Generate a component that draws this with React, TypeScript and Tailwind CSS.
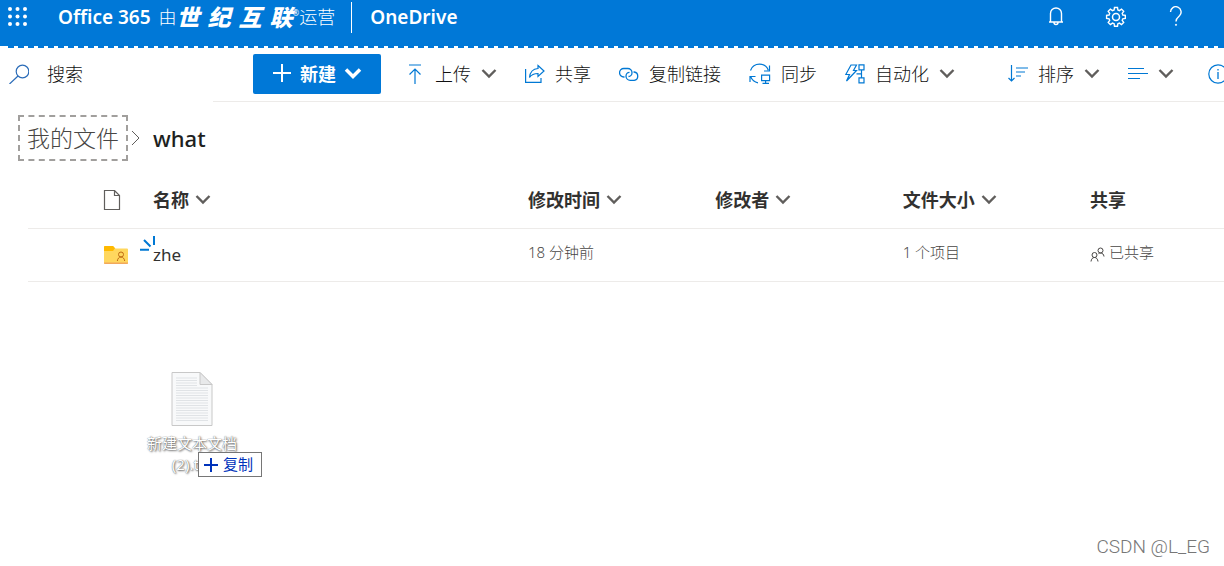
import clsx from 'clsx';
import { ReactNode, useState } from 'react';

function Icon({
  size = 20,
  className,
  children
}: {
  size?: number;
  className?: string;
  children: ReactNode;
}) {
  return (
    <svg
      width={size}
      height={size}
      viewBox={`0 0 ${size} ${size}`}
      fill="none"
      stroke="currentColor"
      aria-hidden="true"
      className={clsx('shrink-0', className)}
    >
      {children}
    </svg>
  );
}

function ChevronDown({ className }: { className?: string }) {
  return (
    <Icon size={16} className={className}>
      <path d="M1.500 4 8 10.500 14.500 4" strokeWidth="2.400" />
    </Icon>
  );
}

const icons = {
  upload: (
    <Icon>
      <path d="M4 1h12M10 20V5M4.500 10.500 10 5l5.500 5.500" strokeWidth="1.200" />
    </Icon>
  ),
  share: (
    <Icon>
      <path d="M.6 5v13.400h15.400v-4.400" strokeWidth="1.200" />
      <path d="M13 1.500 19 7l-6 5.500V9.500C9 9.500 6.500 10.500 4.500 13.500 5 8.500 8 4.800 13 4.500z" strokeWidth="1.200" />
    </Icon>
  ),
  link: (
    <Icon>
      <path
        d="M5.500 13H4.800a4.200 4.200 0 0 1 0-8.500h4a4.200 4.200 0 0 1 4.200 4.200c0 2-1.500 3.800-3.500 3.800"
        strokeWidth="1.300"
      />
      <path
        d="M14.500 8h.7a4.200 4.200 0 0 1 0 8.300h-4A4.200 4.200 0 0 1 7 12.200c0-2 1.500-3.800 3.500-3.800"
        strokeWidth="1.300"
      />
    </Icon>
  ),
  sync: (
    <Icon size={22}>
      <path d="M1.500 7.500C3 3.500 6.500 1.200 10.500 1.200c4 0 7.300 2.300 8.800 6M20.500 2.500V8h-5.500M9 19.800c-3.500-.6-6-2.800-7.300-6M1 19v-5.500h5.500" strokeWidth="1.200" />
      <path d="M12.600 12.100h8v5.500h-8zM16.600 17.600v3M13.500 20.400h6.500" strokeWidth="1.200" />
    </Icon>
  ),
  flow: (
    <Icon>
      <path d="M6 1h5.500L8.500 6.500h3L1.500 17 4.500 10.500H.8z" strokeWidth="1.200" />
      <path d="M14 .8h5v5h-5zM14 13.800h5v5h-5zM16.500 5.800v8M11.500 9.800h5" strokeWidth="1.200" />
    </Icon>
  ),
  sort: (
    <Icon>
      <path d="M3.500 1v16M.5 14l3 3 3-3M8 4h12M8 8h9M8 12h5" strokeWidth="1.200" />
    </Icon>
  ),
  list: (
    <Icon>
      <path d="M0 4.500h16M0 9.500h20M0 14.500h12" />
    </Icon>
  )
};

const leftCommands = [
  { label: '上传', icon: icons.upload, menu: true },
  { label: '共享', icon: icons.share },
  { label: '复制链接', icon: icons.link },
  { label: '同步', icon: icons.sync },
  { label: '自动化', icon: icons.flow, menu: true }
];

function Command({ label, icon, menu }: { label: string; icon: ReactNode; menu?: boolean }) {
  return (
    <button
      type="button"
      className="flex h-10 shrink-0 items-center gap-2.5 text-lg font-light text-[#111]"
    >
      <span className="text-[#0078d4]">{icon}</span>
      <span className="whitespace-nowrap">{label}</span>
      {menu && <ChevronDown className="text-[#605e5c]" />}
    </button>
  );
}

function TopBar() {
  return (
    <header className="h-12 bg-[#0078d7] text-white">
      <div className="flex h-[34px] items-center justify-between">
        <div className="flex h-full items-center">
          <button type="button" aria-label="应用启动器" className="pr-7.5 pl-2">
            <svg width="20" height="20" viewBox="0 0 20 20" fill="currentColor">
              {[2, 9.5, 17].map((y) =>
                [2, 9.5, 17].map((x) => <circle key={`${x}-${y}`} cx={x} cy={y} r="2" />)
              )}
            </svg>
          </button>
          <a href="#office" className="flex items-center text-lg leading-8 whitespace-nowrap">
            <span className="text-[19px] font-semibold">Office 365</span>
            <span className="ml-2 font-light">由</span>
            <span className="flex items-center gap-2 text-[23px] font-black italic">
              <span>世</span>
              <span>纪</span>
              <span>互</span>
              <span>联</span>
            </span>
            <sup className="text-[8px]">®</sup>
            <span className="font-light">运营</span>
          </a>
          <a
            href="#onedrive"
            className="ml-4 flex h-[31px] items-center border-l border-white pl-4.5 text-[19px] font-semibold"
          >
            OneDrive
          </a>
        </div>
        <div className="flex shrink-0 pr-4.5">
          <button type="button" aria-label="通知" className="flex w-15 justify-center">
            <Icon>
              <path d="M3 16h14M4.500 16V7.500a5.500 5.500 0 0 1 11 0V16M8 16.500a2 2 0 0 0 4 0" strokeWidth="1.400" />
            </Icon>
          </button>
          <button type="button" aria-label="设置" className="flex w-15 justify-center">
            <Icon size={22}>
              <circle cx="11" cy="11" r="3.500" strokeWidth="1.500" />
              <path
                d="M9.500 1.500h3l.4 2.500 1.500.6 2.100-1.500 2.200 2.200-1.500 2.100.6 1.600 2.500.4v3l-2.500.4-.6 1.500 1.500 2.100-2.200 2.200-2.100-1.500-1.500.6-.4 2.500h-3l-.4-2.500-1.600-.6-2.100 1.500-2.200-2.200 1.500-2.100-.6-1.500-2.500-.4v-3l2.500-.4.6-1.600-1.500-2.100 2.200-2.200 2.100 1.500 1.600-.6z"
                strokeWidth="1.400"
              />
            </Icon>
          </button>
          <button type="button" aria-label="帮助" className="flex w-15 justify-center">
            <Icon>
              <path d="M4.500 6a5.300 5.300 0 1 1 9 3.800C11.500 11.500 10 12.500 10 15.500" strokeWidth="1.400" />
              <circle cx="10" cy="18.800" r=".6" fill="currentColor" />
            </Icon>
          </button>
        </div>
      </div>
      {/* drop target edge */}
      <div className="mt-3 h-0.5 bg-[repeating-linear-gradient(90deg,#fff_0_4px,transparent_4px_10px)] bg-position-[4px_0]" />
    </header>
  );
}

function CommandBar() {
  return (
    <div className="flex h-[54px] overflow-hidden">
      <label className="flex w-[213px] shrink-0 items-center gap-[18px] pb-0.5 pl-[9px]">
        <Icon className="text-[#2b6cb8]">
          <circle cx="13.500" cy="7.500" r="6.300" strokeWidth="1.200" />
          <path d="M9 12 .5 20" strokeWidth="1.200" />
        </Icon>
        <input
          type="search"
          aria-label="搜索"
          placeholder="搜索"
          className="w-full min-w-0 text-lg font-light outline-none placeholder:text-[#111]"
        />
      </label>
      <div className="flex min-w-0 grow items-center justify-between border-b border-[#edebe9] pb-px pl-10">
        <div className="flex items-center gap-7">
          <button
            type="button"
            className="-mr-1 flex h-10 w-32 shrink-0 items-center justify-center gap-2 rounded-xs bg-[#0078d7] text-lg font-bold text-white"
          >
            <Icon>
              <path d="M10 0v18M1 9h18" strokeWidth="2" />
            </Icon>
            <span>新建</span>
            <Icon size={18}>
              <path d="m2 4.500 7 7 7-7" strokeWidth="3.500" />
            </Icon>
          </button>
          {leftCommands.map((command) => (
            <Command key={command.label} {...command} />
          ))}
        </div>
        <div className="-mr-1 flex shrink-0 items-center gap-7">
          <Command label="排序" icon={icons.sort} menu />
          <button type="button" aria-label="视图" className="flex items-center gap-2.5">
            <span className="text-[#0078d4]">{icons.list}</span>
            <ChevronDown className="text-[#605e5c]" />
          </button>
          <button type="button" aria-label="详细信息" className="ml-1.5 text-[#0078d4]">
            <Icon>
              <circle cx="10" cy="10" r="9.200" strokeWidth="1.200" />
              <path d="M10 8v7M10 5v1.500" strokeWidth="1.300" />
            </Icon>
          </button>
        </div>
      </div>
    </div>
  );
}

function Breadcrumb() {
  return (
    <nav aria-label="路径" className="flex items-center px-[18px] pt-[13px]">
      <a
        href="#files"
        className="flex h-[46px] items-center border-2 border-dashed border-[#a19f9d] px-[7px] text-[23px] font-light text-[#484644]"
      >
        我的文件
      </a>
      <Icon size={16} className="text-[#605e5c]">
        <path d="m4 1 7 7-7 7" />
      </Icon>
      <h1 className="pl-[9px] text-[22px] font-medium text-[#201f1e]">what</h1>
    </nav>
  );
}

function HeaderButton({ label, sortable = true }: { label: string; sortable?: boolean }) {
  return (
    <button type="button" className="flex items-center gap-1.5 text-lg font-bold whitespace-nowrap">
      {label}
      {sortable && <ChevronDown className="text-[#605e5c]" />}
    </button>
  );
}

function FileTable() {
  return (
    <div className="pt-[11px] pl-7">
      <table className="w-full table-fixed text-left text-[15px] text-[#484644]">
        <thead className="text-[#323130]">
          <tr className="h-14 border-b border-[#edebe9]">
            <th className="w-[125px] pl-[75px]">
              <Icon className="text-[#605e5c]">
                <path d="M1.500.5h10l5 5v14h-15zM11.500.5v5h5" strokeWidth="1.200" />
              </Icon>
            </th>
            <th className="w-[375px]">
              <HeaderButton label="名称" />
            </th>
            <th>
              <HeaderButton label="修改时间" />
            </th>
            <th>
              <HeaderButton label="修改者" />
            </th>
            <th>
              <HeaderButton label="文件大小" />
            </th>
            <th className="w-[134px]">
              <HeaderButton label="共享" sortable={false} />
            </th>
          </tr>
        </thead>
        <tbody>
          <tr className="h-[53px] border-b border-[#edebe9] font-light">
            <td className="pl-[76px]">
              <svg width="24" height="20" viewBox="0 0 24 20" aria-hidden="true">
                <path d="M1 1h8l2.500 2.500H23a1 1 0 0 1 1 1V18a1 1 0 0 1-1 1H1a1 1 0 0 1-1-1V2a1 1 0 0 1 1-1z" fill="#ffd75e" />
                <path d="M1 1h8l2 2.200L9 6H0V2a1 1 0 0 1 1-1z" fill="#ffb900" />
                <path d="M0 17.500h24V18a1 1 0 0 1-1 1H1a1 1 0 0 1-1-1z" fill="#f2a85c" />
                <g fill="none" stroke="#c06a14">
                  <circle cx="17" cy="9.500" r="2.500" />
                  <path d="M13.300 16c.4-2.500 1.700-4 3.700-4s3.300 1.500 3.700 4" />
                </g>
              </svg>
            </td>
            <td className="relative">
              <svg
                width="18"
                height="16"
                viewBox="0 0 18 16"
                aria-hidden="true"
                className="absolute top-1.5 -left-3.5"
              >
                <path d="M15 1v9M5 5l6.500 6.500M1 14.800h9" stroke="#0078d4" strokeWidth="2" />
              </svg>
              <a href="#zhe" className="text-[17px] font-normal text-[#323130]">
                zhe
              </a>
            </td>
            <td className="pb-1">18 分钟前</td>
            <td></td>
            <td className="pb-1">1 个项目</td>
            <td className="pb-1">
              <a href="#shared" className="flex items-center gap-1 whitespace-nowrap">
                <Icon size={15} className="mt-1">
                  <circle cx="10.500" cy="3.500" r="2.500" />
                  <circle cx="4.500" cy="8" r="2.500" />
                  <path d="M1 14.500c.3-2.500 1.500-4 3.500-4s3.200 1.500 3.500 4M8.500 6.600c.5-.4 1.200-.6 2-.6 2 0 3.200 1.300 3.500 3.500" />
                </Icon>
                已共享
              </a>
            </td>
          </tr>
        </tbody>
      </table>
    </div>
  );
}

function DraggedFile({ x, y }: { x: number; y: number }) {
  return (
    <div className="pointer-events-none absolute w-[100px]" style={{ left: x, top: y }}>
      <svg width="42" height="55" viewBox="0 0 42 55" className="mx-auto" aria-hidden="true">
        <path d="M1 .5h28l12 12v41H1z" fill="#f8f9fa" stroke="#c8c8c8" />
        <path d="M29 .5v12h12z" fill="#e8e9ea" stroke="#c8c8c8" />
        {Array.from({ length: 18 }, (_, i) => (
          <path key={i} d={`M5 ${6 + i * 2.5}H${i < 4 ? 26 : 37}`} stroke="#e0e3e6" />
        ))}
      </svg>
      <p className="pt-1.5 text-center text-[15px] leading-[21px] text-white [text-shadow:0_0_1px_#555,1px_1px_2px_#666]">
        <span className="whitespace-nowrap">新建文本文档</span>
        <br />
        (2).txt
      </p>
      <div className="absolute top-20 left-14 flex h-[25px] items-center gap-[5px] border border-[#767676] bg-white pr-2 pl-[5px] text-[15px] whitespace-nowrap text-[#0033bb]">
        <Icon size={14}>
          <path d="M7 0v14M0 7h14" strokeWidth="2" />
        </Icon>
        复制
      </div>
    </div>
  );
}

export default function App() {
  const [drag] = useState({ x: 142, y: 372 });

  return (
    <div className="relative min-h-screen overflow-hidden bg-white font-['Noto_Sans','Noto_Sans_CJK_SC',sans-serif] text-[#323130]">
      <TopBar />
      <CommandBar />
      <main>
        <Breadcrumb />
        <FileTable />
      </main>
      <DraggedFile x={drag.x} y={drag.y} />
      <p className="absolute right-3.5 bottom-[5px] font-[Roboto,sans-serif] text-[19px] font-light text-[#777]">
        CSDN @L_EG
      </p>
    </div>
  );
}
